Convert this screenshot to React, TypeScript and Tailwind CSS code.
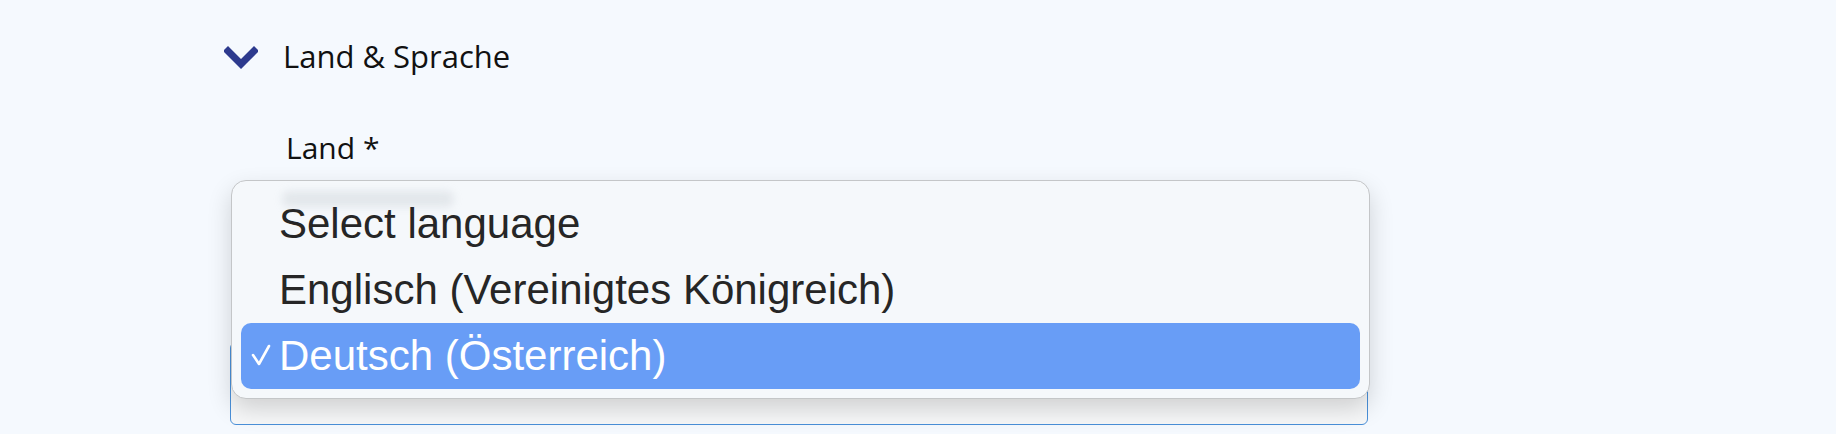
export default function App() {
  const options = [
    { label: "Select language", selected: false },
    { label: "Englisch (Vereinigtes Königreich)", selected: false },
    { label: "Deutsch (Österreich)", selected: true },
  ];

  return (
    <div className="relative h-[434px] w-full overflow-hidden bg-[#f5f9fe]">
      <div className="pl-[224px] pt-[36px]">
        {/* section header */}
        <div className="flex h-[40px] items-center">
          <svg width="34" height="24" viewBox="0 0 34 24" className="mt-[4px] shrink-0">
            <path d="M4 5 L17 18 L30 5" fill="none" stroke="#2d3a8e" strokeWidth="7" strokeLinecap="square" />
          </svg>
          <span className="ml-[25px] font-['Open_Sans',sans-serif] text-[31px] leading-[40px] text-[#111]">
            Land &amp; Sprache
          </span>
        </div>

        <div className="mt-[52px] pl-[62px] font-['Open_Sans',sans-serif] text-[30px] leading-[40px] text-[#111]">
          Land *
        </div>

        {/* native select underneath */}
        <div className="ml-[6px] mt-[174px] h-[83px] w-[1138px] rounded-[6px] border border-[#4a90d9] bg-[#f7f8f9]" />
      </div>

      {/* open dropdown */}
      <div className="absolute left-[231px] top-[180px] h-[219px] w-[1139px] rounded-[15px] border border-[#c4c6c8] bg-[#f5f8fb] px-[9px] py-[10px] shadow-[0_10px_24px_rgba(0,0,0,0.16)]">
        <div className="pointer-events-none absolute left-[50px] top-[10px] h-[16px] w-[172px] rounded-full bg-[#9aa3b0]/20 blur-[4px]" />
        {options.map((o) => (
          <div
            key={o.label}
            className={
              o.selected
                ? "relative flex h-[66px] items-center rounded-[10px] bg-[#689df6] font-['Liberation_Sans',sans-serif] text-[42px] text-white"
                : "relative flex h-[66px] items-center font-['Liberation_Sans',sans-serif] text-[42px] text-[#262626]"
            }
          >
            {o.selected && (
              <svg width="22" height="24" viewBox="0 0 22 24" className="absolute left-[10px] top-[20px]">
                <path d="M2 12 L8 21 L18 3" fill="none" stroke="white" strokeWidth="2.6" strokeLinecap="round" strokeLinejoin="round" />
              </svg>
            )}
            <span className="pl-[38px] leading-[66px]">{o.label}</span>
          </div>
        ))}
      </div>
    </div>
  );
}
